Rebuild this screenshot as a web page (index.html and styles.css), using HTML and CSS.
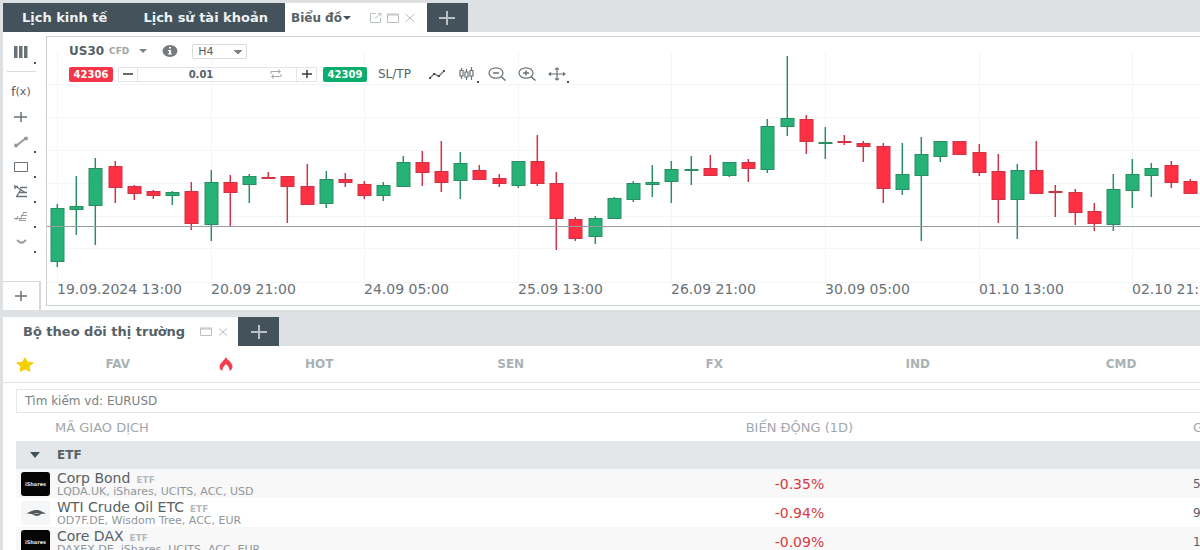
FILE: index.html
```html
<!DOCTYPE html>
<html lang="vi">
<head>
<meta charset="utf-8">
<meta name="viewport" content="width=device-width, initial-scale=1">
<title>Biểu đồ</title>
<link rel="stylesheet" href="styles.css">
</head>
<body>
<section class="panel">
  <nav class="tabs">
    <button class="tab tab-dark">Lịch kinh tế</button>
    <button class="tab tab-dark">Lịch sử tài khoản</button>
    <div class="tab tab-active">
      <button class="tab-name">Biểu đồ<svg class="caret" width="8" height="4" viewBox="0 0 8 4"><path d="M0 0h8L4 4z"/></svg></button>
      <span class="window-tools">
        <button aria-label="Mở cửa sổ"><svg width="12" height="10" viewBox="0 0 12 10"><path d="M6 .5H.5v9h10V5M5 5.500 11 .5M8 .5h3v3"/></svg></button>
        <button aria-label="Phóng to"><svg width="12" height="10" viewBox="0 0 12 10"><path d="M.5 1h11v8.500H.5zM.5 2h11"/></svg></button>
        <button aria-label="Đóng"><svg width="12" height="10" viewBox="0 0 12 10"><path d="M1.500 1l9 8M10.500 1l-9 8"/></svg></button>
      </span>
    </div>
    <button class="tab-add" aria-label="Thêm"><svg width="18" height="16" viewBox="0 0 18 16"><path d="M9 1v14M1 8h16"/></svg></button>
  </nav>

  <div class="workspace">
    <aside class="rail">
      <button class="tool tool-first has-menu" aria-label="Bố cục"><svg width="16" height="12" viewBox="0 0 16 12"><path class="solid" d="M1 0h3.500v12H1zM6 0h3.500v12H6zM11 0h3.500v12H11z"/></svg></button>
      <button class="tool tool-fx">f<small>(x)</small></button>
      <button class="tool" aria-label="Con trỏ"><svg width="16" height="12" viewBox="0 0 16 12"><path d="M8 1v10M1 6h13" stroke-width="1.500"/></svg></button>
      <button class="tool has-menu" aria-label="Đường"><svg width="16" height="12" viewBox="0 0 16 12"><path class="pale" d="M3 10 13 2" stroke-width="2"/><circle class="pale-fill" cx="3" cy="9.500" r="2"/><circle class="pale-fill" cx="13" cy="2.500" r="2"/></svg></button>
      <button class="tool has-menu" aria-label="Hình"><svg width="16" height="12" viewBox="0 0 16 12"><path d="M1.500 1.500h13v9h-13z"/></svg></button>
      <button class="tool has-menu" aria-label="Fibonacci"><svg width="16" height="14" viewBox="0 0 16 14"><path d="M1 1.500h4M7 2.500h7M6 7.500h8M3 11.500h11M2 4V1l11 7M8 4l-4 7" stroke-width="1.300"/></svg></button>
      <button class="tool has-menu" aria-label="Kênh giá"><svg width="16" height="12" viewBox="0 0 16 12"><path class="pale" d="M1 7.500h12M6 10 11 1M8 4.500h6M7 9.500h6M10 1.500h4M3 9l2-4"/></svg></button>
      <button class="tool has-menu" aria-label="Thêm công cụ"><svg width="16" height="12" viewBox="0 0 16 12"><path class="pale" d="M4 4l3 2.500h3L13 4" stroke-width="1.800"/></svg></button>
      <button class="tool tool-add" aria-label="Thêm biểu đồ"><svg width="16" height="12" viewBox="0 0 16 12"><path d="M8 1v10M2 6h12" stroke-width="1.500"/></svg></button>
    </aside>

    <div class="chart">
      <svg class="plot" id="plot" role="img" aria-label="US30 H4"></svg>
      <div class="controls">
        <div class="symbol-row">
          <button class="symbol"><b>US30</b><span class="kind">CFD</span><svg class="caret caret-soft" width="8" height="4" viewBox="0 0 8 4"><path d="M0 0h8L4 4z"/></svg></button>
          <button class="info" aria-label="Thông tin"><svg width="16" height="12" viewBox="0 0 16 12"><ellipse cx="8" cy="6" rx="7.500" ry="6"/><path d="M7 2h2v1.500H7zM6 5h3v3.500h1v1H6v-1h1V6H6z"/></svg></button>
          <select class="interval" aria-label="Khung thời gian"><option>H4</option></select>
        </div>
        <div class="trade-row">
          <button class="price sell">42306</button>
          <div class="stepper">
            <button class="step" aria-label="Giảm"><svg width="10" height="8" viewBox="0 0 10 8"><path d="M0 4h10"/></svg></button>
            <input class="volume" value="0.01" aria-label="Khối lượng">
            <button class="swap" aria-label="Đổi"><svg width="12" height="10" viewBox="0 0 12 10"><path d="M1 5V2.500h9M8 .5l2.500 2L8 4.500M11 5v2.500H2M4 5.500 1.500 7.500 4 9.500"/></svg></button>
            <button class="step step-plus" aria-label="Tăng"><svg width="10" height="8" viewBox="0 0 10 8"><path d="M0 4h10M5 0v8"/></svg></button>
          </div>
          <button class="price buy">42309</button>
          <button class="sltp">SL/TP</button>
          <div class="chart-tools">
            <button aria-label="Kiểu đường"><svg width="18" height="14" viewBox="0 0 18 14"><path d="M2 11 6 7l5 2 5-5"/><path class="solid" d="M1 10h2v2H1zM5 6h2.500v2H5zM9.500 8H12v2H9.500zM15 3h2v2h-2z"/></svg></button>
            <button class="has-menu" aria-label="Kiểu nến"><svg width="18" height="14" viewBox="0 0 18 14"><path d="M3.500 1v2M3.500 9v3M2 3.500h3v5.500H2zM8.500 2v3M8.500 10v3M7 5h3v5H7zM13.500 0v3M13.500 9v4M12 3.500h3V9h-3z"/></svg></button>
            <button aria-label="Thu nhỏ"><svg width="18" height="14" viewBox="0 0 18 14"><ellipse cx="8" cy="6" rx="7" ry="5.200"/><path d="M5 6h6M13 9.500l4.500 4" stroke-width="1.500"/></svg></button>
            <button aria-label="Phóng to"><svg width="18" height="14" viewBox="0 0 18 14"><ellipse cx="8" cy="6" rx="7" ry="5.200"/><path d="M5 6h6M8 3.500v5M13 9.500l4.500 4" stroke-width="1.500"/></svg></button>
            <button class="has-menu" aria-label="Di chuyển"><svg width="18" height="14" viewBox="0 0 18 14"><path d="M9 1v12M1 7h16M7 2.500 9 1l2 1.500M7 11.500 9 13l2-1.500M3 5.500 1 7l2 1.500M15 5.500 17 7l-2 1.500"/></svg></button>
          </div>
        </div>
      </div>
    </div>
  </div>
</section>

<section class="panel market">
  <nav class="tabs">
    <div class="tab tab-active tab-market">
      <button class="tab-name">Bộ theo dõi thị trường</button>
      <span class="window-tools">
        <button aria-label="Phóng to"><svg width="12" height="10" viewBox="0 0 12 10"><path d="M.5 1h11v7.500H.5zM.5 2h11"/></svg></button>
        <button aria-label="Đóng"><svg width="12" height="10" viewBox="0 0 12 10"><path d="M2 1.500l8 7M10 1.500l-8 7"/></svg></button>
      </span>
    </div>
    <button class="tab-add" aria-label="Thêm"><svg width="18" height="16" viewBox="0 0 18 16"><path d="M9 1v14M1 8h16"/></svg></button>
  </nav>

  <nav class="groups">
    <button class="group"><svg width="18" height="15" viewBox="0 0 18 15"><path fill="#f5d000" stroke="#f5d000" stroke-linejoin="round" d="m9 .8 2.500 4.400 5.700.7-4.200 3.400 1 5L9 11.900l-5 2.400 1-5L.8 5.900l5.700-.7z"/></svg><span>FAV</span></button>
    <button class="group"><svg width="14" height="14" viewBox="0 0 14 14"><path fill="#f23c4f" d="M7 0c.5 2.800 6.500 5 6.500 9.500 0 2-1.200 3.500-3 4.500.5-2.500-1-4.500-3.500-7-2.500 2.500-4 4.500-3.500 7-1.800-1-3-2.500-3-4.500C.5 7 2.500 6 3.500 4.500 4.800 3 6 2 7 0z"/></svg><span>HOT</span></button>
    <button class="group"><span>SEN</span></button>
    <button class="group"><span>FX</span></button>
    <button class="group"><span>IND</span></button>
    <button class="group"><span>CMD</span></button>
  </nav>

  <div class="listing">
    <input class="search" type="search" placeholder="Tìm kiếm vd: EURUSD" aria-label="Tìm kiếm">
    <table class="quotes">
      <colgroup><col class="col-symbol"><col class="col-change"><col class="col-price"></colgroup>
      <thead>
        <tr><th>MÃ GIAO DỊCH</th><th>BIẾN ĐỘNG (1D)</th><th>G</th></tr>
      </thead>
      <tbody>
        <tr class="category"><td colspan="3"><button><svg class="caret" width="10" height="6" viewBox="0 0 10 6"><path d="M0 0h10L5 6z"/></svg>ETF</button></td></tr>
        <tr>
          <td><div class="asset"><span class="logo logo-dark">iShares</span><div><div class="name">Corp Bond<span class="tag">ETF</span></div><div class="detail">LQDA.UK, iShares, UCITS, ACC, USD</div></div></div></td>
          <td>-0.35%</td><td>5</td>
        </tr>
        <tr>
          <td><div class="asset"><span class="logo"><svg width="20" height="8" viewBox="0 0 20 8"><path fill="#50565a" d="M0 4.500C4 3 6 1 11 1c3 0 5 2 9 3.500-3 .3-4 0-5 .5-2 2.500-6 2.500-8 .5-2-1-4-1-7-1z"/><path fill="#a5abad" d="M8 4h5v1H8z"/></svg></span><div><div class="name">WTI Crude Oil ETC<span class="tag">ETF</span></div><div class="detail">OD7F.DE, Wisdom Tree, ACC, EUR</div></div></div></td>
          <td>-0.94%</td><td>9</td>
        </tr>
        <tr>
          <td><div class="asset"><span class="logo logo-dark">iShares</span><div><div class="name">Core DAX<span class="tag">ETF</span></div><div class="detail">DAXEX.DE, iShares, UCITS, ACC, EUR</div></div></div></td>
          <td>-0.09%</td><td>1</td>
        </tr>
      </tbody>
    </table>
  </div>
</section>
<script src="chart.js"></script>
</body>
</html>
```

FILE: styles.css
```css
* { box-sizing: border-box; }

body {
  margin: 0;
  padding: 3px 0 0 3px;
  height: 100vh;
  overflow: hidden;
  background: #dde1e3;
  color: #566167;
  font-family: "DejaVu Sans", sans-serif;
  font-size: 12px;
}

button, input, select { font: inherit; color: inherit; }

button {
  display: flex;
  align-items: center;
  padding: 0;
  border: 0;
  background: none;
  white-space: nowrap;
}

svg { display: block; flex: none; }

.caret { fill: #43525b; }
.caret-soft { fill: #7c8387; }

/* Tabs */
.tabs { display: flex; height: 29px; }

.tab { display: flex; align-items: center; font-size: 13px; font-weight: 700; }
.tab-dark { padding: 0 17px 0 19px; background: #43525b; color: #eef1f2; }
.tab-active { width: 142px; padding: 0 11px 0 6px; justify-content: space-between; background: #fff; }
.tab-active .tab-name { font-size: 12px; gap: 1px; }
.tab-market { width: 235px; padding: 0 9px 0 20px; }
.tab-market .tab-name { font-size: 13px; }

.window-tools { display: flex; gap: 5px; }
.window-tools svg { fill: none; stroke: #b9bfc2; }

.tab-add { width: 41px; justify-content: center; background: #43525b; }
.tab-add svg { stroke: #b9c1c5; stroke-width: 2; }

/* Chart workspace */
.workspace { display: flex; background: #fff; }

.rail { display: flex; flex-direction: column; width: 43px; }

.tool {
  position: relative;
  height: 25px;
  padding-left: 10px;
}
.tool svg { fill: none; stroke: #697277; }
.tool .solid { fill: #697277; stroke: none; }
.tool .pale { stroke: #949a9d; }
.tool .pale-fill { fill: #949a9d; stroke: none; }
.tool-fx { padding-left: 8px; font-size: 13px; }
.tool-fx small { font-size: 11px; }

.tool-first {
  height: 40px;
  margin: 0 10px 7px 4px;
  padding-left: 6px;
  border-bottom: 1px solid #d9dddf;
}
.tool-add {
  height: 29px;
  margin: auto 5px 0 0;
  border: solid #d5d9db;
  border-width: 1px 2px 0 0;
}

/* Corner dot of buttons that open a submenu */
.has-menu { position: relative; }
.has-menu::after {
  content: "";
  position: absolute;
  right: 10px;
  bottom: 1px;
  width: 2px;
  height: 2px;
  background: #4b5357;
}
.tool-first.has-menu::after { right: 0; bottom: 7px; }

.chart {
  display: grid;
  flex: 1;
  min-width: 0;
  margin: 4px 0;
  border: 1px solid #cbd0d2;
  border-right: 0;
}
.chart > * { grid-area: 1 / 1; }

.plot { width: 100%; height: 268px; overflow: hidden; }
.plot .grid { stroke: #f4f5f6; }
.plot .level { stroke: #969ea2; }
.plot .up { fill: #26b176; stroke: #2b8e62; }
.plot .down { fill: #fd3044; stroke: #cf3346; }
.plot text { fill: #697277; font-size: 14px; }

.controls {
  display: flex;
  flex-direction: column;
  align-items: flex-start;
  gap: 6px;
  align-self: start;
  padding: 6px 0 0 22px;
}

.symbol-row { display: flex; align-items: center; height: 16px; background: #fff; }
.symbol .kind { margin: 0 10px 0 5px; font-size: 9px; font-weight: 700; color: #9da4a7; }
.info { margin: 0 14px 0 15px; }
.info svg { fill: #777b7d; }
.info path { fill: #fff; }
.interval {
  width: 55px;
  height: 15px;
  padding: 0 5px;
  border: 1px solid #d9dddf;
  border-radius: 2px;
  appearance: none;
  background:
    linear-gradient(#7c8387, #7c8387) no-repeat 41px 5px / 8px 1px,
    linear-gradient(#7c8387, #7c8387) no-repeat 42px 6px / 6px 1px,
    linear-gradient(#7c8387, #7c8387) no-repeat 43px 7px / 4px 1px,
    linear-gradient(#7c8387, #7c8387) no-repeat 44px 8px / 2px 1px,
    #fff;
  font-size: 11px;
  line-height: 13px;
}

.trade-row { display: flex; align-items: center; height: 18px; padding-right: 8px; background: #fff; }
.price {
  justify-content: center;
  width: 44px;
  height: 15px;
  border-radius: 2px;
  color: #fff;
  font-size: 10px;
  font-weight: 700;
}
.sell { background: #f43648; }
.buy { background: #0bad6c; }

.stepper { display: flex; height: 15px; margin: 0 6px 0 5px; border: 1px solid #e3e6e8; }
.step { justify-content: center; width: 19px; border-right: 1px solid #e3e6e8; }
.step-plus { width: 20px; border: 0; border-left: 1px solid #e3e6e8; }
.step svg { stroke: #343a3d; stroke-width: 1.5; }
.volume { width: 126px; padding: 0; border: 0; text-align: center; font-size: 10px; font-weight: 700; }
.swap { width: 32px; padding-left: 6px; }
.swap svg { fill: none; stroke: #a3aaad; }

.sltp { margin: 0 17px 0 11px; font-size: 12px; }
.chart-tools { display: flex; gap: 12px; }
.chart-tools svg { fill: none; stroke: #697277; stroke-width: 1.2; }
.chart-tools .solid { fill: #4b5357; stroke: none; }
.chart-tools .has-menu::after { right: -3px; bottom: -2px; }

/* Market watch */
.market { margin-top: 7px; background: #fff; }
.market .tabs { background: #dde1e3; }

.groups { display: flex; height: 37px; border-bottom: 1px solid #dfe3e5; overflow: hidden; }
.group { flex: 0 0 17%; padding: 0 15px 0 13px; font-weight: 700; color: #a9b1b5; }
.group span { flex: 1; text-align: center; }
.group svg + span { padding-left: 10px; }

.listing { padding: 6px 0 0 13px; }
.search {
  display: block;
  width: 100%;
  height: 24px;
  padding: 0 8px;
  border: 1px solid #e5e8e9;
  border-right: 0;
  appearance: none;
  font-size: 12px;
}
.search::placeholder { color: #7b8184; }

.quotes { width: 100%; table-layout: fixed; border-collapse: collapse; }
.col-symbol { width: 50%; }
.col-change { width: 32%; }
.quotes th { height: 28px; padding: 0; font-size: 13px; font-weight: 400; color: #a1a8ac; }
.quotes th:first-child { padding-left: 39px; text-align: left; }
.quotes td { height: 29px; padding: 0; }
.quotes td:nth-child(2) { padding-left: 4px; text-align: center; font-size: 14px; color: #d63a40; }
.quotes th:nth-child(2) { padding-left: 4px; }
.quotes th:nth-child(3), .quotes td:nth-child(3) { padding-left: 206px; text-align: left; white-space: nowrap; }
.quotes tbody tr:nth-child(even) { background: #f8f8f8; }

.quotes .category { background: #e4e7ea; }
.quotes .category td { height: 28px; }
.category button { gap: 17px; padding-left: 14px; font-weight: 700; }

.asset { display: flex; align-items: center; gap: 7px; padding-left: 5px; }
.logo {
  display: flex;
  align-items: center;
  justify-content: center;
  width: 29px;
  height: 24px;
  border-radius: 3px;
  background: #f5f6f8;
}
.logo-dark { background: #050505; color: #e5e5e5; font-size: 5px; font-weight: 700; }
.name { font-size: 14px; line-height: 13px; }
.tag { margin-left: 6px; font-size: 9px; font-weight: 700; color: #b3babd; }
.detail { font-size: 11px; line-height: 9px; color: #8f969a; }
```

FILE: chart.js
```js
const plot = document.getElementById('plot');
const NS = 'http://www.w3.org/2000/svg';

// direction, high, body top, body bottom, low
const candles = [
  ['up',204,208,262,267],['up',176,206,210,235],['up',158,168,206,245],['down',161,166,188,203],
  ['down',185,186,194,200],['down',190,191,196,199],['up',191,192,196,205],['down',182,191,224,230],
  ['up',170,182,225,241],['down',175,182,193,226],['up',174,176,185,203],['down',172,177,179,179],
  ['down',176,176,187,223],['down',164,186,205,205],['up',171,179,204,208],['down',173,179,183,187],
  ['down',181,184,196,199],['up',182,185,196,201],['up',156,162,187,187],['down',151,162,173,186],
  ['down',141,171,183,192],['up',152,163,181,199],['down',165,170,180,180],['down',174,178,184,187],
  ['up',161,161,186,188],['down',135,161,184,186],['down',172,183,219,250],['down',217,219,239,241],
  ['up',216,218,237,244],['up',197,198,219,219],['up',181,183,200,202],['up',165,182,185,197],
  ['up',161,169,182,203],['up',156,169,171,185],['down',155,168,176,176],['up',162,162,176,177],
  ['down',159,162,169,182],['up',119,126,170,173],['up',56,118,127,136],['down',115,119,142,154],
  ['up',127,142,144,159],['down',135,141,143,145],['down',141,143,147,162],['down',143,146,189,203],
  ['up',143,174,190,195],['up',137,154,176,241],['up',141,141,157,162],['down',141,141,155,155],
  ['down',144,152,173,176],['down',154,171,200,223],['up',164,170,200,239],['down',141,170,194,194],
  ['down',185,191,193,217],['down',189,192,213,225],['down',203,211,224,231],['up',174,189,225,231],
  ['up',159,174,191,208],['up',163,168,176,197],['down',161,165,183,188],['down',179,181,194,194]
];
const dates = ['19.09.2024 13:00','20.09 21:00','24.09 05:00','25.09 13:00','26.09 21:00','30.09 05:00','01.10 13:00','02.10 21:'];

const root = document.createElementNS(NS, 'g');
root.setAttribute('transform', 'translate(-47 -37)');
plot.append(root);

function add(tag, attributes, text) {
  const node = document.createElementNS(NS, tag);
  for (const key in attributes) node.setAttribute(key, attributes[key]);
  if (text) node.textContent = text;
  root.append(node);
}

for (const y of [84, 117, 150, 183, 216, 248, 282]) {
  add('path', { class: 'grid', d: `M47 ${y + 0.5}H4000` });
}
dates.forEach((date, i) => {
  const x = Math.round(57 + 153.6 * i);
  add('path', { class: 'grid', d: `M${x + 0.5} 53V282` });
  add('text', { x, y: 294 }, date);
});
candles.forEach(([direction, high, top, bottom, low], i) => {
  const x = Math.round(57 + 19.2 * i);
  add('path', { class: direction, 'stroke-width': 1.5, d: `M${x + 0.3} ${high}V${low}` });
  add('rect', { class: direction, x: x - 6, y: top + 0.5, width: 13, height: Math.max(bottom - top - 1, 1) });
});
add('path', { class: 'level', d: 'M47 226.5H4000' });
```
